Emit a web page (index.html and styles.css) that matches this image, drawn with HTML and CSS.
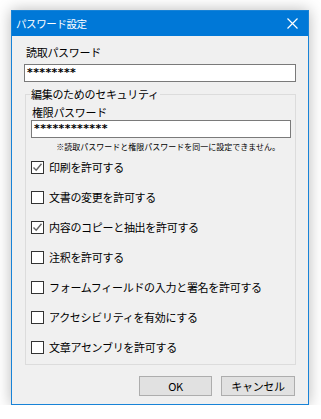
FILE: index.html
```html
<!DOCTYPE html>
<html lang="ja">
<head>
    <meta charset="UTF-8">
    <title>パスワード設定</title>
    <link rel="stylesheet" href="styles.css">
</head>
<body>
<div class="window">
    <div class="titlebar">
        <span class="title">パスワード設定</span>
        <svg class="close" width="11" height="11" viewBox="0 0 11 11">
            <path d="M0.5 0.5 L10.5 10.5 M10.5 0.5 L0.5 10.5" stroke="#fff" stroke-width="1.2" fill="none"/>
        </svg>
    </div>
    <div class="content">
        <div class="label">読取パスワード</div>
        <div class="textbox wide">********</div>

        <fieldset class="group">
            <legend>編集のためのセキュリティ</legend>
            <div class="label">権限パスワード</div>
            <div class="textbox inner">************</div>
            <div class="note">※読取パスワードと権限パスワードを同一に設定できません。</div>

            <div class="check"><span class="box checked"><svg width="11" height="11" viewBox="0 0 11 11"><path d="M1.5 5.5 L4.2 8.3 L9.5 1.8" stroke="#666" stroke-width="1.4" fill="none"/></svg></span>印刷を許可する</div>
            <div class="check"><span class="box"></span>文書の変更を許可する</div>
            <div class="check"><span class="box checked"><svg width="11" height="11" viewBox="0 0 11 11"><path d="M1.5 5.5 L4.2 8.3 L9.5 1.8" stroke="#666" stroke-width="1.4" fill="none"/></svg></span>内容のコピーと抽出を許可する</div>
            <div class="check"><span class="box"></span>注釈を許可する</div>
            <div class="check"><span class="box"></span>フォームフィールドの入力と署名を許可する</div>
            <div class="check"><span class="box"></span>アクセシビリティを有効にする</div>
            <div class="check"><span class="box"></span>文章アセンブリを許可する</div>
        </fieldset>

        <div class="buttons">
            <button type="button" class="btn ok">OK</button>
            <button type="button" class="btn">キャンセル</button>
        </div>
    </div>
</div>
</body>
</html>
```

FILE: styles.css
```css
/* ページ全体 */
body {
    margin: 0;
    background-color: #ffffff;
    font-family: "Noto Sans CJK JP", "DejaVu Sans", sans-serif;
    font-size: 11px;
    letter-spacing: -0.3px;
    color: #000;
}

/* ダイアログ本体 */
.window {
    width: 296px;
    margin: 10px 0 0 11px;
    border: 1px solid #1883d7;
    background-color: #f0f0f0;
    box-shadow: 0 0 14px rgba(0,0,0,0.28);
}

.titlebar {
    height: 25px;
    background-color: #0078d7;
    color: white;
    display: flex;
    align-items: center;
    justify-content: space-between;
    padding: 0 10px 0 4px;
}

.title {
    font-size: 10.5px;
    letter-spacing: -0.4px;
    line-height: 15px;
}

.content {
    padding: 9px 12px 8px 12px;
}

.label {
    line-height: 15px;
    height: 15px;
    padding-left: 2px;
}

/* テキストボックス */
.textbox {
    box-sizing: border-box;
    height: 18px;
    border: 1px solid #7a7a7a;
    background-color: white;
    padding-left: 2px;
    line-height: 16px;
    font-family: "DejaVu Sans", sans-serif;
    font-size: 11px;
    font-weight: bold;
    letter-spacing: 0.4px;
}

.wide {
    width: 272px;
    margin-top: 4px;
}

.inner {
    width: 260px;
}

/* グループボックス */
.group {
    box-sizing: border-box;
    width: 271px;
    margin: 5px 0 0 1px;
    padding: 3px 5px 2px 5px;
    border: 1px solid #dcdcdc;
    min-width: 0;
}

.group legend {
    padding: 0 1px;
    margin-left: -1px;
    line-height: 15px;
}

.group .label {
    padding-left: 1px;
}

.note {
    font-size: 8px;
    letter-spacing: 0;
    line-height: 10px;
    height: 10px;
    margin: 4px 0 0 0;
    width: 249px;
    text-align: right;
    white-space: nowrap;
}

/* チェックボックス */
.check {
    height: 30px;
    display: flex;
    align-items: center;
    line-height: 15px;
}

.box {
    box-sizing: border-box;
    width: 13px;
    height: 13px;
    border: 1px solid #333;
    background-color: white;
    margin-right: 5px;
    display: flex;
    align-items: center;
    justify-content: center;
}

.box svg {
    display: block;
}

/* ボタン */
.buttons {
    display: flex;
    justify-content: flex-end;
    gap: 9px;
    margin-top: 11px;
    padding-right: 1px;
}

.btn {
    width: 74px;
    height: 20px;
    background-color: #e1e1e1;
    border: 1px solid #adadad;
    font-family: "Noto Sans CJK JP", sans-serif;
    font-size: 11px;
    letter-spacing: -0.3px;
    line-height: 16px;
    padding: 0;
    color: #000;
}

.ok {
    width: 73px;
}
```
